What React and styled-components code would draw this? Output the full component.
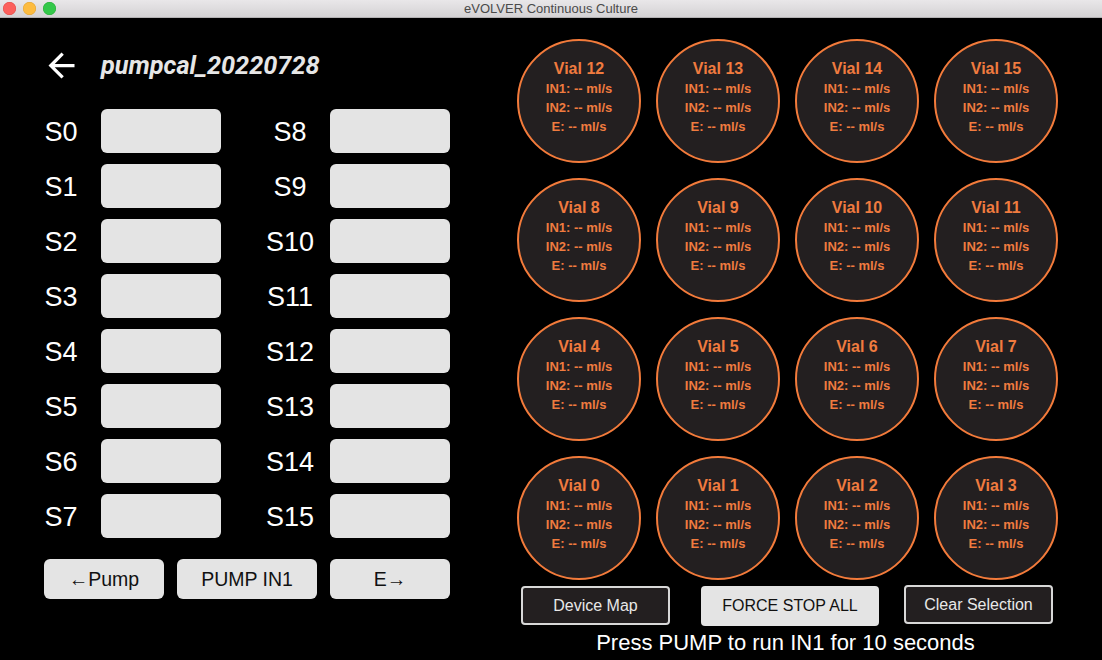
import styled, { createGlobalStyle } from "styled-components";

const GlobalStyle = createGlobalStyle`
  html, body {
    margin: 0;
    padding: 0;
    background: #000;
  }
  body {
    font-family: "Liberation Sans", Arial, sans-serif;
  }
`;

const leftPumps = ["S0", "S1", "S2", "S3", "S4", "S5", "S6", "S7"];
const rightPumps = ["S8", "S9", "S10", "S11", "S12", "S13", "S14", "S15"];
const vialRows = [
  [12, 13, 14, 15],
  [8, 9, 10, 11],
  [4, 5, 6, 7],
  [0, 1, 2, 3],
];

const App = () => (
  <>
    <GlobalStyle />
    <Window>
      <TitleBar>
        <Lights>
          <Light $color="#fc605c" $edge="#de4a45" />
          <Light $color="#fdbc40" $edge="#dea234" />
          <Light $color="#34c84a" $edge="#27aa35" />
        </Lights>
        <WindowTitle>eVOLVER Continuous Culture</WindowTitle>
      </TitleBar>

      <Content>
        <LeftPanel>
          <Header>
            <BackButton>
              <svg width="39" height="39" viewBox="0 0 24 24" fill="#fff">
                <path d="M20 11H7.83l5.59-5.59L12 4l-8 8 8 8 1.41-1.41L7.83 13H20v-2z" />
              </svg>
            </BackButton>
            <CalName>pumpcal_20220728</CalName>
          </Header>

          <PumpList>
            {leftPumps.map((name, i) => (
              <PumpRow key={name}>
                <PumpPair>
                  <PumpLabel>{name}</PumpLabel>
                  <PumpInput />
                </PumpPair>
                <PumpPair>
                  <PumpLabel>{rightPumps[i]}</PumpLabel>
                  <PumpInput />
                </PumpPair>
              </PumpRow>
            ))}
          </PumpList>

          <ActionRow>
            <ActionButton $width={120}>←Pump</ActionButton>
            <ActionButton $width={140}>PUMP IN1</ActionButton>
            <ActionButton $width={120}>E→</ActionButton>
          </ActionRow>
        </LeftPanel>

        <RightPanel>
          <VialGrid>
            {vialRows.flat().map((n) => (
              <Vial key={n}>
                <VialName>Vial {n}</VialName>
                <VialRate>IN1: -- ml/s</VialRate>
                <VialRate>IN2: -- ml/s</VialRate>
                <VialRate>E: -- ml/s</VialRate>
              </Vial>
            ))}
          </VialGrid>

          <ControlRow>
            <ControlButton $width={149}>Device Map</ControlButton>
            <ControlButton $width={178} $light>
              FORCE STOP ALL
            </ControlButton>
            <ControlButton $width={149}>Clear Selection</ControlButton>
          </ControlRow>

          <StatusText>Press PUMP to run IN1 for 10 seconds</StatusText>
        </RightPanel>
      </Content>
    </Window>
  </>
);

const Window = styled.div`
  width: 1102px;
  height: 660px;
  background: #000;
  overflow: hidden;
`;

const TitleBar = styled.div`
  position: relative;
  height: 18px;
  display: flex;
  align-items: center;
  justify-content: center;
  background: linear-gradient(#e9e7e9, #d4d2d4);
  border-bottom: 1px solid #b3b1b3;
  box-sizing: border-box;
`;

const Lights = styled.div`
  position: absolute;
  left: 3px;
  top: 2px;
  display: flex;
  gap: 7px;
`;

const Light = styled.span`
  width: 13px;
  height: 13px;
  border-radius: 50%;
  background: ${(p) => p.$color};
  box-shadow: inset 0 0 0 0.5px ${(p) => p.$edge};
`;

const WindowTitle = styled.div`
  font-size: 13px;
  color: #4a4a4a;
  line-height: 18px;
`;

const Content = styled.div`
  display: flex;
`;

const LeftPanel = styled.div`
  width: 517px;
  box-sizing: border-box;
  padding-left: 31px;
`;

const Header = styled.div`
  display: flex;
  align-items: center;
  height: 39px;
  margin-top: 28px;
`;

const BackButton = styled.div`
  width: 39px;
  height: 39px;
  margin-left: 11px;
  margin-right: 20px;
  display: flex;
`;

const CalName = styled.div`
  font-family: Roboto, "Liberation Sans", sans-serif;
  font-style: italic;
  font-weight: 700;
  font-size: 25.3px;
  color: #e6e6e6;
`;

const PumpList = styled.div`
  display: flex;
  flex-direction: column;
  gap: 11px;
  margin-top: 24px;
`;

const PumpRow = styled.div`
  display: flex;
  gap: 39px;
`;

const PumpPair = styled.div`
  display: flex;
  align-items: center;
  gap: 10px;
`;

const PumpLabel = styled.div`
  width: 60px;
  text-align: center;
  font-size: 27px;
  color: #fff;
  padding-top: 3px;
`;

const PumpInput = styled.div`
  width: 120px;
  height: 44px;
  border-radius: 6px;
  background: #e4e4e4;
`;

const ActionRow = styled.div`
  display: flex;
  gap: 13px;
  margin-top: 21px;
  margin-left: 13px;
`;

const ActionButton = styled.button`
  width: ${(p) => p.$width}px;
  height: 40px;
  border: none;
  border-radius: 6px;
  background: #e4e4e4;
  color: #111;
  font-family: "Liberation Sans", Arial, sans-serif;
  font-size: 19.5px;
  padding: 0;
`;

const RightPanel = styled.div`
  display: flex;
  flex-direction: column;
  width: 541px;
`;

const VialGrid = styled.div`
  display: grid;
  grid-template-columns: repeat(4, 124px);
  gap: 15px;
  margin-top: 21px;
`;

const Vial = styled.div`
  width: 124px;
  height: 124px;
  box-sizing: border-box;
  border: 2px solid #f37b3b;
  border-radius: 50%;
  background: #231f20;
  color: #f07b3f;
  font-weight: 700;
  display: flex;
  flex-direction: column;
  align-items: center;
  justify-content: center;
  padding-bottom: 8px;
`;

const VialName = styled.div`
  font-size: 16px;
  line-height: 20px;
`;

const VialRate = styled.div`
  font-size: 13px;
  line-height: 19px;
`;

const ControlRow = styled.div`
  display: flex;
  align-items: flex-start;
  margin-top: 6px;
  margin-left: 4px;
  gap: 31px;

  & > :last-child {
    margin-left: -6px;
    margin-top: -1px;
  }
`;

const ControlButton = styled.button`
  width: ${(p) => p.$width}px;
  height: ${(p) => (p.$light ? 40 : 39)}px;
  border-radius: 4px;
  border: ${(p) => (p.$light ? "none" : "2px solid #d8d8d8")};
  background: ${(p) => (p.$light ? "#e4e4e4" : "#231f20")};
  color: ${(p) => (p.$light ? "#111" : "#e8e8e8")};
  font-family: "Liberation Sans", Arial, sans-serif;
  font-size: 16px;
  padding: 0;
`;

const StatusText = styled.div`
  margin-top: 5px;
  text-align: center;
  font-size: 22px;
  line-height: 24px;
  color: #fff;
  margin-left: -4px;
`;

export default App;
